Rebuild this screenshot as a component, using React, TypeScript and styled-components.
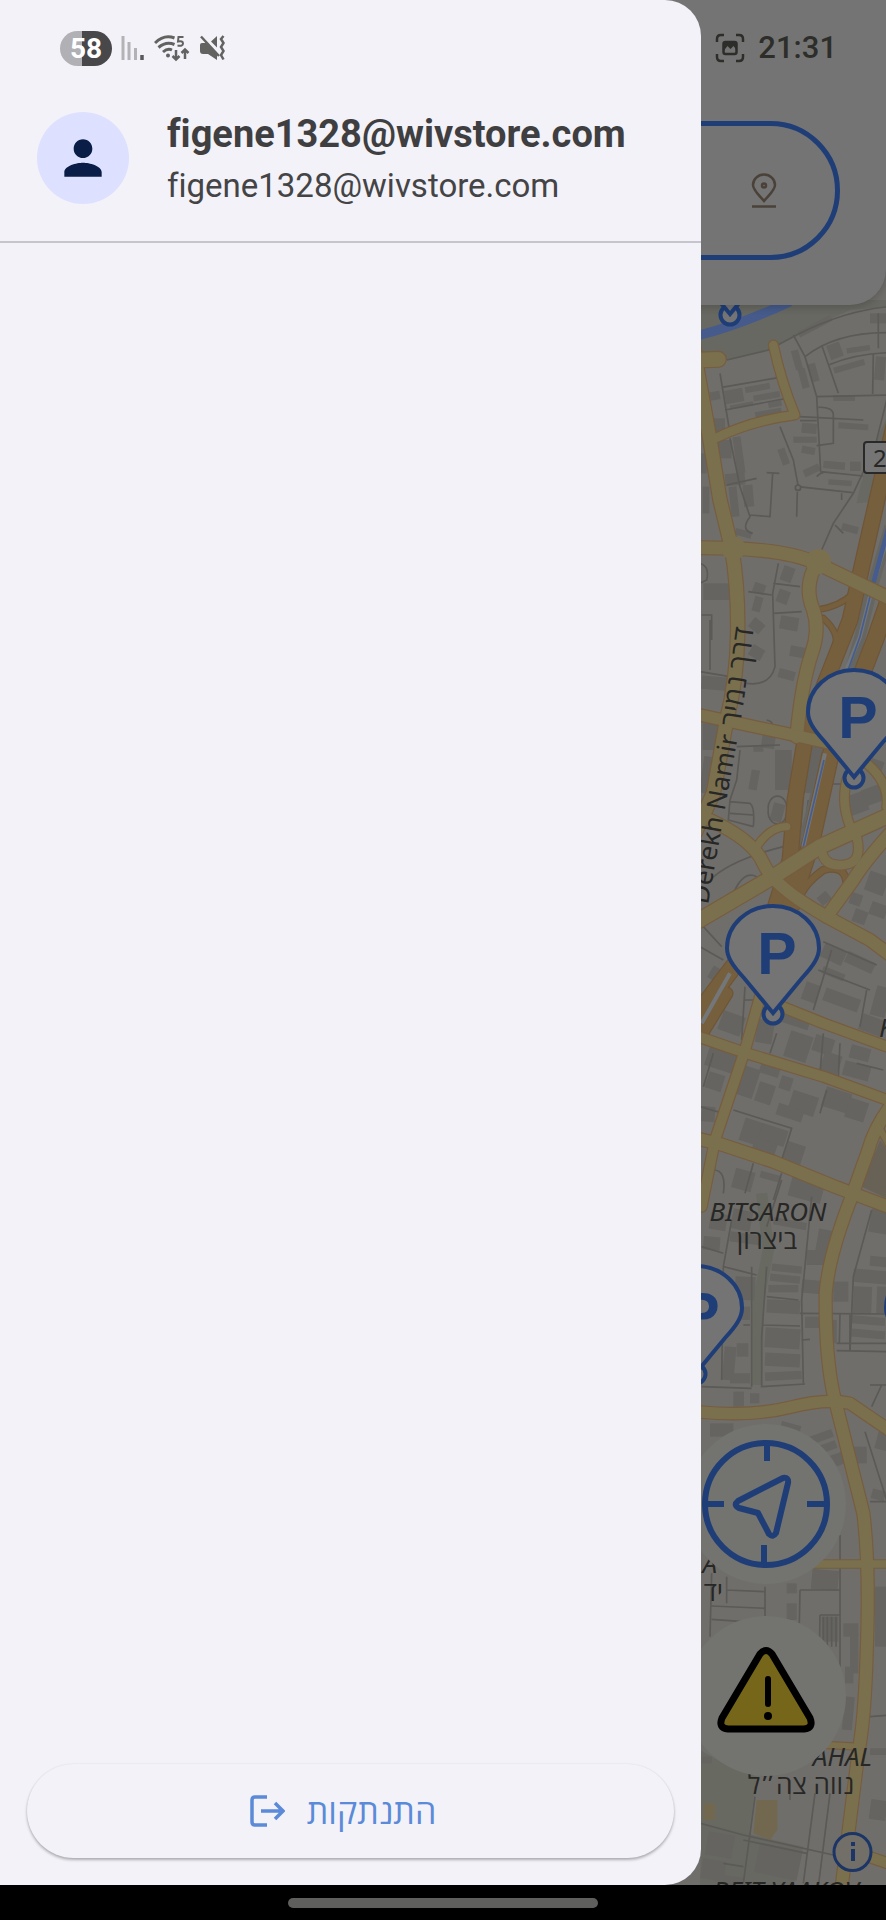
import React from "react";
import styled, { createGlobalStyle } from "styled-components";

const BLUE = "#1f3e77";
const DIM = "#747474";

const GlobalStyle = createGlobalStyle`
  * { box-sizing: border-box; }
  body { margin: 0; background: #000; }
  button, input { font: inherit; border: 0; padding: 0; background: none; }
`;

const Screen = styled.div`
  min-height: 100vh;
  display: flex;
  flex-direction: column;
  font-family: Roboto, "Open Sans", "Noto Sans", sans-serif;
  overflow: hidden;
`;

const Stage = styled.div`
  flex: 1;
  display: flex;
  position: relative;
  overflow: hidden;
  background: #706e6b;
`;

const MapCanvas = styled.svg`
  position: absolute;
  inset: 0;
  width: 100%;
  height: 100%;
`;

const SearchPanel = styled.header`
  position: absolute;
  inset: 0 0 auto 0;
  padding: 121px 46px 45px;
  background: ${DIM};
  border-radius: 0 0 36px 36px;
  box-shadow: 0 2px 8px rgba(0, 0, 0, 0.2);
`;

const SearchField = styled.label`
  display: flex;
  align-items: center;
  justify-content: flex-end;
  height: 139px;
  padding: 0 58px;
  border: 5px solid ${BLUE};
  border-radius: 70px;
`;

const SearchInput = styled.input`
  flex: 1;
  min-width: 0;
  outline: none;
`;

const FloatingControls = styled.div`
  position: absolute;
  right: 40px;
  bottom: 109px;
  display: flex;
  flex-direction: column;
  gap: 32px;
`;

const RoundButton = styled.button`
  display: grid;
  place-items: center;
  width: 160px;
  height: 160px;
  border-radius: 50%;
  background: #737370;
`;

const Drawer = styled.aside`
  position: relative;
  display: flex;
  flex-direction: column;
  width: calc(100% - 185px);
  background: #f3f2f8;
  border-radius: 0 36px 36px 0;
`;

const Account = styled.div`
  display: flex;
  align-items: center;
  gap: 38px;
  padding: 104px 37px 29px;
  border-bottom: 2px solid #c6c5cd;
`;

const Avatar = styled.div`
  display: grid;
  place-items: center;
  flex: none;
  width: 92px;
  height: 92px;
  border-radius: 50%;
  background: #dde1ff;
`;

const AccountText = styled.div`
  display: flex;
  flex-direction: column;
  padding-top: 4px;
  line-height: 52px;
  color: #444446;
  font-variant-ligatures: none;
`;

const AccountName = styled.strong`
  font-size: 38px;
  font-weight: 700;
  color: #3f3f41;
`;

const AccountEmail = styled.span`
  font-size: 33px;
`;

const DrawerFooter = styled.div`
  margin-top: auto;
  padding: 0 27px 27px;
`;

const LogoutButton = styled.button`
  display: flex;
  align-items: center;
  justify-content: center;
  gap: 22px;
  width: 100%;
  height: 94px;
  padding-right: 16px;
  border-radius: 47px;
  background: #f3f2f8;
  color: #5a8ad8;
  font-family: "Open Sans", "Noto Sans", sans-serif;
  font-size: 34px;
  line-height: 40px;
  box-shadow: 0 2px 3px rgba(0, 0, 0, 0.28), 0 0 2px rgba(0, 0, 0, 0.08);
`;

const StatusBar = styled.div`
  position: absolute;
  inset: 30px 49px auto 60px;
  display: flex;
  align-items: center;
  justify-content: space-between;
  height: 36px;
`;

const StatusGroup = styled.div<{ $gap: number }>`
  display: flex;
  align-items: center;
  gap: ${(p) => p.$gap}px;
`;

const Battery = styled.span`
  width: 52px;
  height: 35px;
  border-radius: 18px;
  background: linear-gradient(90deg, #b0b0b5 42%, #48484a 42%);
  color: #fff;
  font-size: 28px;
  line-height: 36px;
  font-weight: 700;
  text-align: center;
`;

const Clock = styled.time`
  font-size: 31px;
  line-height: 36px;
  font-weight: 500;
  color: #2d2d29;
`;

const NavBar = styled.footer`
  display: grid;
  place-items: center;
  height: 35px;
  background: #000;
`;

const NavHandle = styled.div`
  width: 35%;
  height: 10px;
  border-radius: 5px;
  background: #5f5f5e;
`;

/* Street geometry, in thirds of a pixel from the map's own origin. */
type Road = { d: string; w: number };

const yellowRoads: Road[] = [
  { d: "M0 60L20 200L60 420L90 600L125 745Q145 860 143 1000T110 1260L70 1480L10 1610", w: 40 },
  { d: "M30 743L125 745Q300 752 380 790T600 895", w: 38 },
  { d: "M380 790Q340 860 370 930Q390 990 365 1060Q335 1150 320 1310", w: 38 },
  { d: "M250 135Q275 250 315 345Q190 360 75 415", w: 26 },
  { d: "M30 180L85 178", w: 44 },
  { d: "M30 1245Q170 1275 310 1305L420 1330", w: 34 },
  { d: "M20 1865L250 1730L390 1640L600 1545", w: 44 },
  { d: "M60 1560Q190 1620 220 1690T410 1850L540 1920L600 1965", w: 36 },
  { d: "M290 1580Q240 1580 200 1640", w: 22 },
  { d: "M600 1600Q520 1690 490 1740L410 1850", w: 36 },
  { d: "M500 1610Q520 1690 460 1695T395 1650", w: 26 },
  { d: "M470 1440Q450 1520 490 1600", w: 26 },
  { d: "M530 1390Q600 1450 590 1520", w: 26 },
  { d: "M250 2110L400 2170L600 2243", w: 30 },
  { d: "M30 2212L170 2260L400 2330L600 2403", w: 30 },
  { d: "M210 2090L165 2250L75 2520L35 2720", w: 30 },
  { d: "M30 2518L90 2532L250 2585L440 2662L600 2722", w: 36 },
  { d: "M600 2420Q550 2490 535 2550L485 2690Q415 2870 407 2980Q405 3160 430 3280L450 3360L520 3640Q540 3800 530 4060Q525 4250 505 4360L455 4760", w: 36 },
  { d: "M560 2470L600 2540", w: 18 },
  { d: "M30 3336Q190 3350 300 3322T480 3310L600 3392", w: 34 },
  { d: "M370 3792L600 3792", w: 22 },
  { d: "M410 4335L510 4340", w: 18 },
  { d: "M470 4648L600 4692", w: 30 },
];

const motorways: Road[] = [
  { d: "M620 340L570 560L520 780L480 960L350 1290L315 1500L300 1680L250 1840", w: 44 },
  { d: "M600 890L555 1020L420 1370L365 1620Q330 1740 290 1840L130 2000L10 2160", w: 48 },
  { d: "M490 880Q450 920 380 930M400 955Q450 1000 435 1040", w: 14 },
  { d: "M470 1760Q470 1690 400 1710Q330 1760 320 1820", w: 18 },
  { d: "M110 2080L30 2210", w: 34 },
];

const lanes = [
  "M110 180L235 150L330 100Q470 30 600 20M310 105L345 170L380 290L392 515L520 528M345 170Q440 95 600 98M395 135L445 280M378 290L600 285M415 195Q500 160 600 158M550 160L548 282M565 40L565 145",
  "M90 220L120 400M95 262L270 232M105 330L290 295M330 350L520 360M330 362L380 362M385 322Q430 320 430 345L430 430L380 437",
  "M270 380L310 480L325 560L488 578M322 575L320 650M230 518L268 520M248 520L240 650L180 645M120 415L150 560L180 650Q150 690 188 700M110 555L200 535",
  "M600 260L555 440L490 580L430 670L395 750M435 675L460 700M455 580L455 600M380 530Q395 515 400 520",
  "M265 790L248 880L255 1100Q240 1160 170 1150M175 875L245 885M250 850L330 860M250 940L335 935M30 1115L120 1130M60 960L60 1110M30 790Q60 800 50 840L30 850M35 945L65 945L65 1020",
  "M150 1350L140 1440L120 1500L115 1560L190 1580M140 1340L270 1335M120 1505L180 1510Q195 1520 190 1580M120 1540L190 1545M230 1260Q250 1265 245 1275M235 1530A28 35 0 1 1 290 1530A28 35 0 1 1 235 1530",
  "M60 1740Q120 1680 280 1640M130 1780Q160 1710 200 1730M340 1490L330 1610M355 1500L345 1580M400 1452L460 1452",
  "M400 1925L560 1995M385 2010L540 2070M425 1950L370 2130M530 2070L510 2180M165 2060L155 2220M40 1880L95 1940M30 1940L100 1980M160 2100L210 2100",
  "M70 2260L40 2360M260 2200L240 2260M400 2200L390 2320M450 2230L445 2330M500 2290L580 2310M130 2430L305 2485L275 2580M410 2370L390 2440M30 2420L100 2440",
  "M75 2600L35 2700M190 2590L165 2680M275 2620L250 2700M70 2610Q110 2610 100 2680M275 2640L230 2780M365 2690L335 3000L340 3250M545 2730L490 2930L480 3150",
  "M125 2760L100 2900L200 2925M35 2840L100 2860M100 2900L95 3240M185 2900L185 3260M230 2900L215 3110L215 3260L345 3252M230 2990L325 3000M220 3075L330 3078M330 3040L600 3042M480 3042L480 3150M440 3130L600 3130M440 3152L600 3155M450 3042L448 3130M335 3120L360 3118M160 3075L180 3075M35 3260L185 3265",
  "M540 3255L600 3255M575 3255L545 3320M525 3395L590 3600M540 3605L600 3605M450 3705L450 4100M225 3860L225 3950M65 3820L60 4010M65 3918L225 3925M65 3958L160 3965M110 3830L110 3910M110 3870L225 3875M330 3870L450 3870M330 3870L328 3970M390 3945L450 3945M390 3945L388 4070M400 3950L400 4040M412 3950L412 4040M425 3950L425 4040M438 3950L438 4040",
  "M30 4570L160 4605L430 4665M195 4490L160 4750M375 4480L340 4750M420 4480L385 4760M300 4440L300 4500M160 4620L350 4660M100 4690L160 4700M540 4250L600 4245",
];

/* x, y, width, height, rotation */
const buildings: number[][] = [
  [60, 275, 30, 25, -10], [105, 268, 55, 40, -10], [165, 255, 75, 18, -10], [190, 280, 80, 18, -10], [120, 310, 70, 12, -10], [195, 330, 80, 16, -10], [235, 305, 40, 16, -10], [70, 355, 35, 40, 0],
  [310, 150, 22, 60, -15], [330, 205, 22, 60, -15], [360, 190, 22, 55, -15], [320, 70, 110, 18, -28], [415, 130, 40, 45, -20], [470, 140, 70, 16, -8], [430, 190, 95, 18, -16], [555, 170, 30, 70, 5], [430, 285, 65, 18, 0], [540, 40, 50, 30, 0],
  [335, 370, 45, 30, 5], [310, 410, 70, 18, 0], [335, 440, 40, 22, 10], [270, 445, 22, 50, -20], [340, 500, 50, 22, -25], [400, 485, 65, 22, 5], [480, 485, 32, 28, 0], [445, 370, 90, 18, 4], [415, 540, 70, 16, 4], [455, 675, 50, 22, 15],
  [85, 420, 40, 55, 0], [135, 410, 24, 110, -8], [105, 520, 60, 36, -5], [120, 560, 24, 90, -6], [160, 555, 30, 65, -5], [135, 690, 50, 20, 15], [38, 560, 20, 80, 0], [30, 460, 20, 60, 0],
  [40, 850, 80, 50, 0], [190, 850, 35, 30, 20], [275, 800, 35, 45, 20], [262, 870, 35, 40, 20], [190, 890, 25, 45, 15], [180, 960, 40, 35, 40], [270, 950, 55, 40, 10], [180, 1040, 40, 35, 30], [300, 1040, 50, 32, 10], [265, 1110, 50, 28, 15], [35, 1130, 90, 40, 5],
  [215, 1305, 40, 40, 8], [255, 1350, 50, 120, 0], [180, 1410, 25, 60, 10], [190, 1340, 30, 15, 0], [345, 1340, 55, 140, 5], [245, 1510, 35, 55, 15], [38, 1270, 50, 80, 0], [35, 1370, 40, 110, 8],
  [475, 1480, 55, 60, -20], [520, 1460, 60, 50, -20], [540, 1380, 40, 30, 20], [385, 1780, 35, 30, -40], [480, 1780, 35, 35, 20], [530, 1720, 60, 60, 20], [490, 1830, 40, 40, 20], [540, 1810, 50, 40, 20],
  [80, 2060, 35, 50, 15], [60, 2000, 25, 40, 30], [90, 2140, 70, 60, 20], [395, 1940, 70, 45, 25], [465, 1970, 90, 35, 25], [340, 2050, 45, 55, 20], [400, 2080, 110, 40, 20], [395, 2010, 70, 22, 22], [550, 2060, 45, 90, 15], [510, 2150, 70, 50, 20],
  [200, 2160, 50, 70, 10], [260, 2140, 100, 36, 18], [290, 2200, 70, 80, 18], [370, 2210, 60, 50, 18], [395, 2260, 55, 60, 18], [480, 2240, 60, 40, 15], [460, 2290, 80, 45, 15], [50, 2245, 90, 65, 18],
  [50, 2320, 50, 50, 18], [140, 2300, 60, 90, 18], [210, 2290, 60, 36, 18], [200, 2350, 50, 60, 18], [270, 2330, 36, 40, 18], [300, 2380, 80, 60, 18], [260, 2420, 80, 36, 18], [400, 2370, 80, 60, 18], [470, 2400, 60, 60, 18], [35, 2420, 40, 45, 5],
  [155, 2460, 60, 70, 18], [210, 2480, 80, 50, 18], [190, 2520, 70, 36, 18], [285, 2530, 55, 60, 18], [130, 2610, 60, 60, 15], [210, 2620, 60, 20, 15], [300, 2630, 100, 70, 15],
  [60, 2740, 50, 50, 10], [125, 2730, 60, 60, 12], [120, 2800, 90, 30, 8], [380, 2790, 55, 80, 10], [350, 2850, 60, 45, 0], [250, 2760, 100, 22, 10], [540, 2730, 60, 70, 10], [40, 2810, 50, 40, 5],
  [245, 2895, 90, 22, 6], [240, 2925, 90, 22, 6], [235, 2955, 90, 22, 0], [230, 3000, 100, 40, 3], [135, 2930, 60, 70, 3], [335, 2940, 60, 40, 5], [345, 3050, 55, 34, 0], [430, 2945, 45, 60, 0], [490, 2910, 110, 40, 5], [490, 2960, 55, 80, 2], [560, 2960, 40, 80, 2],
  [225, 3085, 105, 60, 4], [225, 3160, 105, 40, 3], [225, 3215, 110, 25, -3], [100, 3140, 35, 100, 5], [140, 3130, 35, 40, 0], [120, 3220, 60, 30, 0], [155, 3020, 25, 40, 0], [130, 3275, 32, 45, 0], [180, 3280, 28, 30, 0], [485, 3050, 100, 24, 5], [485, 3090, 100, 24, 5], [420, 3060, 20, 70, 0], [540, 2870, 60, 30, 5],
  [60, 3370, 70, 40, 0], [270, 3370, 60, 40, 15], [350, 3400, 80, 24, -20], [380, 3430, 60, 24, -20], [415, 3460, 60, 36, -20], [490, 3440, 40, 50, 0], [560, 3390, 40, 60, 15], [545, 3570, 40, 30, 15],
  [365, 3810, 80, 60, 5], [290, 3850, 30, 30, 0], [290, 3910, 30, 50, 0], [395, 3950, 50, 75, 0], [460, 3970, 45, 40, 0], [480, 4000, 25, 120, 0], [555, 3860, 45, 180, 0], [465, 4100, 25, 50, 0], [460, 4190, 30, 100, 5], [355, 4010, 35, 25, 0],
  [35, 4370, 30, 20, 0], [540, 4345, 60, 20, 0], [200, 4640, 130, 90, 12], [50, 4600, 80, 70, 10], [35, 4680, 70, 60, 10], [540, 4500, 50, 60, 8], [100, 4730, 60, 30, 8],
];

function Streets({ roads, fill, casing }: { roads: Road[]; fill: string; casing: string }) {
  return (
    <g fill="none" strokeLinecap="round" strokeLinejoin="round">
      {roads.map((r) => <path key={r.d} d={r.d} stroke={casing} strokeWidth={r.w + 7} />)}
      {roads.map((r) => <path key={r.d} d={r.d} stroke={fill} strokeWidth={r.w} />)}
    </g>
  );
}

function ParkingPin({ x, y }: { x: number; y: number }) {
  return (
    <g transform={`translate(${x} ${y})`} fill={DIM} stroke={BLUE} strokeWidth="4">
      <circle r="9.500" />
      <path d="M0-1L-29-36C-41-49-46-57-46-66A46 42 0 0 1 46-66C46-57 41-49 29-36Z" strokeLinejoin="miter" />
      <text x="4" y="-40" fontFamily="Liberation Sans, sans-serif" fontWeight="700" fontSize="59" textAnchor="middle" fill={BLUE} stroke="none">P</text>
    </g>
  );
}

function CityMap() {
  return (
    <MapCanvas viewBox="0 0 886 1885" preserveAspectRatio="xMaxYMin slice" role="img" aria-label="Map">
      <g transform="translate(690 300) scale(.33333)">
        <path d="M0 0H600V20L480 30L330 100L235 150L120 180L0 160Z" fill="#676861" />
        <path d="M30 105Q150 75 300 5" stroke="#465b8b" strokeWidth="28" fill="none" />
        <path d="M510 560L555 430L600 330V600L500 610Z" fill="#686962" />
        <path d="M30 4350L100 4390L200 4430L175 4610L30 4570Z" fill="#686960" />
        <path d="M35 4570L340 4640L310 4760L30 4760Z" fill="#686862" />
        <path d="M200 4500H262V4590L240 4620L190 4600Z" fill="#726850" />
        <path d="M40 4510H75V4560H40Z" fill="#726850" />
        <path d="M570 2520L600 2560V2700L515 2660Z" fill="#686256" />
        <path d="M215 2680L235 2850L205 3000L200 3255" stroke="#686a62" strokeWidth="34" fill="none" />
        <g fill="#656460">
          {buildings.map(([x, y, w, h, r], i) => (
            <rect key={i} x={x} y={y} width={w} height={h} transform={`rotate(${r} ${x + w / 2} ${y + h / 2})`} />
          ))}
        </g>
        <g fill="none" stroke="#5b5a56" strokeWidth="5">
          {lanes.map((d) => <path key={d} d={d} />)}
        </g>
        <circle cx="324" cy="563" r="8" fill="#706e6b" stroke="#595854" strokeWidth="5" />
        <path d="M600 680L550 850L510 1010L400 1400L335 1650L270 1860" stroke="#656662" strokeWidth="34" fill="none" />
        <Streets roads={motorways} fill="#765f3d" casing="#6f5537" />
        <path d="M600 690L550 850L510 1010L460 1130M405 1360L340 1640M120 2020L35 2170" stroke="#74777a" strokeWidth="12" fill="none" />
        <path d="M596 680L550 850" stroke="#465c8e" strokeWidth="14" fill="none" />
        <path d="M545 870L510 1010L460 1150M402 1380L340 1640" stroke="#465c8e" strokeWidth="5" fill="none" />
        <Streets roads={yellowRoads} fill="#7a704e" casing="#765d3f" />
        <circle cx="385" cy="785" r="38" fill="#7a704e" />
        <circle cx="130" cy="745" r="36" fill="#7a704e" />
      </g>

      <rect x="864" y="442" width="60" height="31" rx="3" fill="#757575" stroke="#292929" strokeWidth="2" />
      <g fill="#272725" fontFamily="Noto Sans, Open Sans, sans-serif" fontSize="26">
        <text x="873" y="467" fontSize="24">20</text>
        <text transform="translate(708 905) rotate(-80)">Derekh Namir</text>
        <text transform="translate(740 727) rotate(-82)" fontSize="28" fontFamily="Open Sans, sans-serif">דרך נמיר</text>
        <text x="768" y="1221" textAnchor="middle" fontStyle="italic">BITSARON</text>
        <text x="767" y="1249" textAnchor="middle" fontFamily="Open Sans, sans-serif">ביצרון</text>
        <text x="879" y="1037" fontStyle="italic">K</text>
        <text x="717" y="1573" textAnchor="end" fontStyle="italic">A</text>
        <text x="723" y="1601" textAnchor="end" fontFamily="Open Sans, sans-serif">יד</text>
        <text x="872" y="1766" textAnchor="end" fontStyle="italic">AHAL</text>
        <text x="801" y="1794" textAnchor="middle" fontFamily="Open Sans, sans-serif">נווה צה״ל</text>
        <text x="786" y="1900" textAnchor="middle" fontStyle="italic">BEIT YAAKOV</text>
      </g>
      <g fill="none" stroke="#1c3566">
        <circle cx="852.500" cy="1852" r="18.500" fill="#716f68" strokeWidth="3" />
        <path d="M853 1849v12M853 1842v4" strokeWidth="4" />
      </g>

      <ParkingPin x={730} y={315} />
      <ParkingPin x={854} y={778} />
      <ParkingPin x={773} y={1014} />
      <ParkingPin x={696} y={1374} />
      <ParkingPin x={932} y={1374} />
    </MapCanvas>
  );
}

function DestinationIcon() {
  return (
    <svg width="26" height="36" viewBox="0 0 26 36" fill="none" stroke="#4a4238" strokeWidth="2.500">
      <path d="M13 28C7 21 2 17 2 12a11 10.500 0 0 1 22 0c0 5-5 9-11 16z" />
      <circle cx="13" cy="12.500" r="2" />
      <path d="M1 33.500h24" />
    </svg>
  );
}

function LocateIcon() {
  return (
    <svg width="130" height="130" viewBox="0 0 130 130" fill="none" stroke={BLUE} strokeWidth="6" strokeLinejoin="round">
      <circle cx="65" cy="65" r="61" />
      <path d="M66 4v18M63 126v-20M4 65h19M126 65h-20" />
      <path d="M82 39L37 62Q32 66 38 69L57 74L68 95Q72 99 75 94L87 44Q88 38 82 39Z" />
    </svg>
  );
}

function WarningIcon() {
  return (
    <svg width="102" height="102" viewBox="0 0 102 102">
      <path d="M45 9Q51 2 57 9L95 73Q99 83 89 84H13Q3 83 7 73Z" fill="#756619" stroke="#000" strokeWidth="7" strokeLinejoin="round" />
      <path d="M53 34v25" stroke="#000" strokeWidth="6" strokeLinecap="round" />
      <circle cx="53" cy="71" r="4" />
    </svg>
  );
}

function CaptureIcon() {
  return (
    <svg width="30" height="30" viewBox="0 0 30 30" fill="none" stroke="#2d2d29" strokeWidth="2.500">
      <path d="M2 9V6q0-4 4-4h3M21 2h3q4 0 4 4v3M28 21v3q0 4-4 4h-3M9 28H6q-4 0-4-4v-3" />
      <rect x="8.500" y="9" width="13" height="12" rx="2" />
      <path d="M8.500 9h13v8l-3-4-3 3-3-3-4 5z" fill="#2d2d29" stroke="none" />
    </svg>
  );
}

function SignalIcon() {
  return (
    <svg width="24" height="26" viewBox="0 0 24 26">
      <path d="M2 1v24M8 7v18M14.500 13v12" stroke="#b3b3b6" strokeWidth="3" />
      <path d="M21 20v5" stroke="#59595a" strokeWidth="3.500" />
    </svg>
  );
}

function WifiIcon() {
  return (
    <svg width="36" height="28" viewBox="0 0 36 28" fill="none" stroke="#626260">
      <path d="M1 9Q10 0 20.500 4M4.500 13.500Q12 7 20.500 10.500M9 18Q13.500 14 18 16" strokeWidth="3" />
      <circle cx="14" cy="21.500" r="2" fill="#626260" stroke="none" />
      <path d="M29.500 3h-5l-.5 4.500q5-1 5 2t-5.500 2" strokeWidth="2" />
      <path d="M22 16v9.500m-3.500-3.500l3.500 3.500 3.500-3.500M31 25v-9.500m-3.500 3.500l3.500-3.500 3.500 3.500" strokeWidth="2.500" />
    </svg>
  );
}

function MutedIcon() {
  return (
    <svg width="26" height="26" viewBox="0 0 26 26" fill="#626260">
      <path d="M1 10q0-2 2-2h4L18 19v6L9 19H4q-3 0-3-3zM12 6.500L18 1v11.500z" />
      <path d="M2 1.500L20 21" stroke="#626260" strokeWidth="2.500" />
      <path d="M24.500 1l-2.500 3 2.500 4-2.500 4 2.500 4-2.500 4 2.500 4.500" fill="none" stroke="#626260" strokeWidth="2.500" />
    </svg>
  );
}

function PersonIcon() {
  return (
    <svg width="56" height="56" viewBox="0 0 24 24" fill="#0a1d46">
      <path d="M12 12c2.210 0 4-1.790 4-4s-1.790-4-4-4-4 1.790-4 4 1.790 4 4 4zm0 2c-2.670 0-8 1.340-8 4v2h16v-2c0-2.660-5.330-4-8-4z" />
    </svg>
  );
}

function LogoutIcon() {
  return (
    <svg width="36" height="34" viewBox="0 0 36 34" fill="none" stroke="currentColor" strokeWidth="3.500">
      <path d="M18 3H6Q3 3 3 6v22q0 3 3 3h12" />
      <path d="M12 17h21M26 9l8 8-8 8" />
    </svg>
  );
}

export default function App() {
  return (
    <Screen>
      <GlobalStyle />
      <Stage>
        <CityMap />
        <SearchPanel>
          <SearchField>
            <SearchInput type="text" aria-label="Destination" />
            <DestinationIcon />
          </SearchField>
        </SearchPanel>
        <FloatingControls>
          <RoundButton type="button" aria-label="Locate me"><LocateIcon /></RoundButton>
          <RoundButton type="button" aria-label="Report a hazard"><WarningIcon /></RoundButton>
        </FloatingControls>
        <Drawer>
          <Account>
            <Avatar><PersonIcon /></Avatar>
            <AccountText>
              <AccountName>figene1328@wivstore.com</AccountName>
              <AccountEmail>figene1328@wivstore.com</AccountEmail>
            </AccountText>
          </Account>
          <DrawerFooter>
            <LogoutButton type="button">
              <LogoutIcon />
              <span dir="rtl">התנתקות</span>
            </LogoutButton>
          </DrawerFooter>
        </Drawer>
        <StatusBar>
          <StatusGroup $gap={9}>
            <Battery>58</Battery>
            <SignalIcon />
            <WifiIcon />
            <MutedIcon />
          </StatusGroup>
          <StatusGroup $gap={13}>
            <CaptureIcon />
            <Clock>21:31</Clock>
          </StatusGroup>
        </StatusBar>
      </Stage>
      <NavBar><NavHandle /></NavBar>
    </Screen>
  );
}
